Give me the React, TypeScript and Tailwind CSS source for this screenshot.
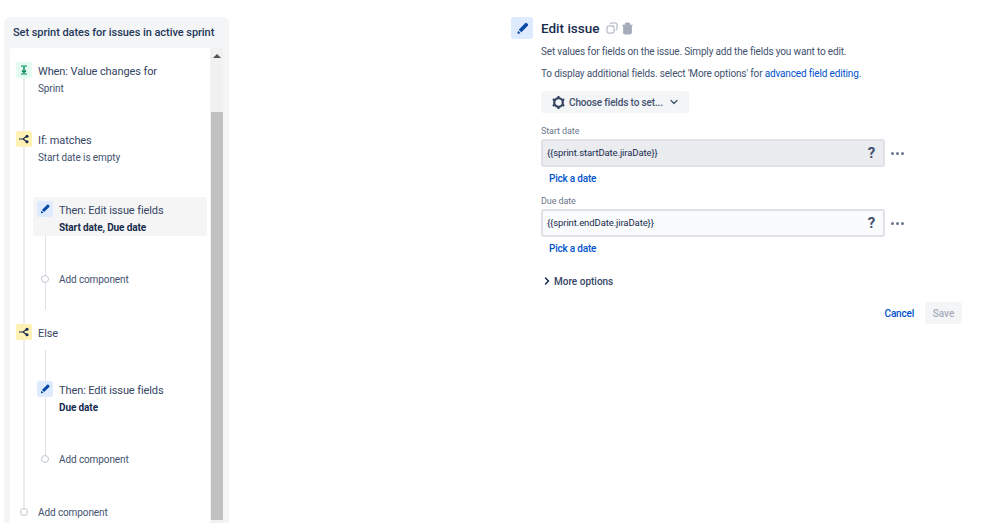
import { ChevronDown, ChevronRight, Copy, Trash2 } from 'lucide-react';

const WhenIcon = () => (
  <svg viewBox="0 0 16 16" className="h-4 w-4">
    <path d="M5 4h6M5 12h6" stroke="#00875a" strokeWidth="1.2" />
    <path d="M8 4.5v6M6 8.5l2 2 2-2" stroke="#00875a" strokeWidth="1.4" fill="none" />
  </svg>
);

const BranchIcon = () => (
  <svg viewBox="0 0 16 16" className="h-4 w-4">
    <path d="M3 8h4l3.5-2.6M7 8l3.5 2.6" stroke="#172b4d" strokeWidth="1.2" fill="none" />
    <circle cx="11" cy="5.2" r="1.5" fill="#172b4d" />
    <circle cx="11" cy="10.8" r="1.5" fill="#172b4d" />
  </svg>
);

const EditIcon = ({ size = 'h-3 w-3' }: { size?: string }) => (
  <svg viewBox="0 0 24 24" className={size} fill="#0747a6">
    <path d="M4.02 19.23a1 1 0 0 0 1.18 1.18l3.81-.78-4.2-4.21-.79 3.81zM19.07 3.52a2 2 0 0 0-2.83 0L5.95 13.8l4.24 4.24 10.29-10.28a2 2 0 0 0 0-2.83l-1.41-1.41z" />
  </svg>
);

const GearIcon = () => (
  <svg viewBox="0 0 16 16" className="h-[15px] w-[15px]" fill="none" stroke="#344563">
    <circle cx="8" cy="8" r="4.6" strokeWidth="2.4" />
    <path d="M8 1v2.5M8 12.5V15M1.9 4.5l2.2 1.3M11.9 10.2l2.2 1.3M1.9 11.5l2.2-1.3M11.9 5.8l2.2-1.3" strokeWidth="2.2" />
  </svg>
);

const IconBox = ({ bg, children }: { bg: string; children: React.ReactNode }) => (
  <div className={`relative z-10 flex h-4 w-4 shrink-0 items-center justify-center rounded-[2px] ${bg}`}>
    {children}
  </div>
);

const AddComponent = ({ className }: { className: string }) => (
  <div className={`flex h-4 items-center ${className}`}>
    <div className="relative z-10 h-2 w-2 shrink-0 rounded-full border border-[#c1c7d0] bg-white" />
    <span className="ml-[10px] text-[#42526e]">Add component</span>
  </div>
);

const StepText = ({ title, sub, bold }: { title: string; sub?: string; bold?: boolean }) => (
  <div>
    <div className="h-4 text-[11px] leading-[20px] tracking-[-0.1px] text-[#344563]">{title}</div>
    {sub && (
      <div className={`mt-[3px] h-4 leading-4 ${bold ? 'font-bold text-[#172b4d]' : 'text-[#42526e]'}`}>{sub}</div>
    )}
  </div>
);

const RuleTree = () => (
  <aside className="ml-1 mt-[17px] flex h-[506px] w-[225px] shrink-0 flex-col rounded-t-md bg-[#f4f5f7] pl-[6px] pr-[6px]">
    <h2 className="flex h-[31px] shrink-0 items-center whitespace-nowrap pl-[3px] pt-[2px] text-[11px] font-medium tracking-[-0.05px] text-[#253858]">
      Set sprint dates for issues in active sprint
    </h2>
    <div className="flex min-h-0 flex-1 rounded-t-[3px] bg-white">
      <div className="relative w-[200px] pl-[6px] pt-[14px] text-[10px] tracking-[-0.1px]">
        <div className="absolute bottom-[12px] left-[13px] top-[20px] w-[2px] bg-[#ebecf0]" />
        <div className="flex gap-[6px]">
          <IconBox bg="bg-[#e3fcef]"><WhenIcon /></IconBox>
          <StepText title="When: Value changes for" sub="Sprint" />
        </div>
        <div className="mt-[34px] flex gap-[6px]">
          <IconBox bg="bg-[#fff0b3]"><BranchIcon /></IconBox>
          <StepText title="If: matches" sub="Start date is empty" />
        </div>
        <div className="relative ml-[17px]">
          <div className="absolute left-[12px] top-[7px] h-[106px] w-px bg-[#dfe1e6]" />
          <div className="relative mt-[31px] flex h-[39px] w-[174px] gap-[6px] rounded-[3px] bg-[#f5f5f5] pl-1 pt-1">
            <IconBox bg="bg-[#deebff]"><EditIcon /></IconBox>
            <StepText title="Then: Edit issue fields" sub="Start date, Due date" bold />
          </div>
          <AddComponent className="ml-2 mt-[35px]" />
        </div>
        <div className="mt-[37px] flex gap-[6px]">
          <IconBox bg="bg-[#fff0b3]"><BranchIcon /></IconBox>
          <StepText title="Else" />
        </div>
        <div className="relative ml-[17px]">
          <div className="absolute left-[12px] top-[10px] h-[108px] w-px bg-[#dfe1e6]" />
          <div className="relative flex gap-[6px] pl-1 pt-[41px]">
            <IconBox bg="bg-[#deebff]"><EditIcon /></IconBox>
            <StepText title="Then: Edit issue fields" sub="Due date" bold />
          </div>
          <AddComponent className="ml-2 mt-[35px]" />
        </div>
        <AddComponent className="ml-[4px] mt-[37px]" />
      </div>
      <div className="flex w-[13px] flex-col bg-[#f1f1f1]">
        <div className="flex h-[64px] justify-center pt-[6px]">
          <div className="h-0 w-0 border-x-[4px] border-b-[4px] border-x-transparent border-b-[#505050]" />
        </div>
        <div className="ml-px h-[408px] w-3 bg-[#c1c1c1]" />
      </div>
    </div>
  </aside>
);

const DateField = ({ label, value, bg }: { label: string; value: string; bg: string }) => (
  <div>
    <div className="h-[14px] text-[9px] leading-[14px] tracking-[-0.1px] text-[#6b778c]">{label}</div>
    <div className="mt-px flex items-center">
      <div className={`flex h-[28px] w-[344px] items-center justify-between rounded-[3px] border-2 border-[#dfe1e6] pl-1 pr-2 text-[9.5px] tracking-[-0.1px] text-[#172b4d] ${bg}`}>
        <span>{value}</span>
        <span className="text-[15px] font-bold text-[#42526e]">?</span>
      </div>
      <span className="ml-[6px] flex gap-[2px]">
        <i className="h-[3px] w-[3px] rounded-full bg-[#6b778c]" />
        <i className="h-[3px] w-[3px] rounded-full bg-[#6b778c]" />
        <i className="h-[3px] w-[3px] rounded-full bg-[#6b778c]" />
      </span>
    </div>
    <div className="ml-2 mt-1 h-4 text-[10px] font-medium leading-4 tracking-[-0.2px] text-[#0052cc]">Pick a date</div>
  </div>
);

const EditPanel = () => (
  <main className="ml-[282px] mt-[17px] flex w-[451px] shrink-0 gap-2 text-[10px]">
    <div className="flex h-[22px] w-[22px] shrink-0 items-center justify-center rounded-[3px] bg-[#deebff]">
      <EditIcon size="h-[15px] w-[15px]" />
    </div>
    <div className="w-[421px]">
      <div className="flex h-[22px] items-center">
        <h1 className="pt-px text-[13.5px] font-medium text-[#172b4d]">Edit issue</h1>
        <Copy className="ml-[7px] h-3 w-3 -scale-x-100 text-[#a5adba]" />
        <Trash2 className="ml-[3px] h-[13px] w-[13px] fill-[#a5adba] text-[#a5adba]" />
      </div>
      <p className="mt-[5px] h-4 leading-4 tracking-[-0.16px] text-[#42526e]">
        Set values for fields on the issue. Simply add the fields you want to edit.
      </p>
      <p className="mt-[6px] h-4 leading-4 tracking-[-0.16px] text-[#42526e]">
        To display additional fields. select 'More options' for{' '}
        <span className="text-[#0052cc]">advanced field editing</span>.
      </p>
      <button className="mt-[9px] flex h-[22px] w-[148px] items-center rounded-[3px] bg-[#f4f5f7] pl-[10px] text-[#42526e]">
        <GearIcon />
        <span className="ml-[3px] font-medium tracking-[-0.15px]">Choose fields to set...</span>
        <ChevronDown className="ml-[5px] h-3 w-3" strokeWidth={2.5} />
      </button>
      <div className="mt-[11px] flex flex-col gap-[7px]">
        <DateField label="Start date" value="{{sprint.startDate.jiraDate}}" bg="bg-[#ebecf0]" />
        <DateField label="Due date" value="{{sprint.endDate.jiraDate}}" bg="bg-[#fafbfc]" />
      </div>
      <div className="mt-4 flex h-4 items-center font-medium text-[#344563]">
        <ChevronRight className="h-3 w-3 text-[#172b4d]" strokeWidth={3} />
        <span className="ml-[1px]">More options</span>
      </div>
      <div className="mt-[13px] flex items-center justify-end gap-[11px]">
        <span className="font-medium tracking-[-0.2px] text-[#0052cc]">Cancel</span>
        <button className="h-[22px] w-[37px] rounded-[3px] bg-[#f4f5f7] font-medium text-[#a5adba]">Save</button>
      </div>
    </div>
  </main>
);

export default function App() {
  return (
    <div className="flex h-[523px] w-[999px] overflow-hidden bg-white font-['Roboto',sans-serif]">
      <RuleTree />
      <EditPanel />
    </div>
  );
}
